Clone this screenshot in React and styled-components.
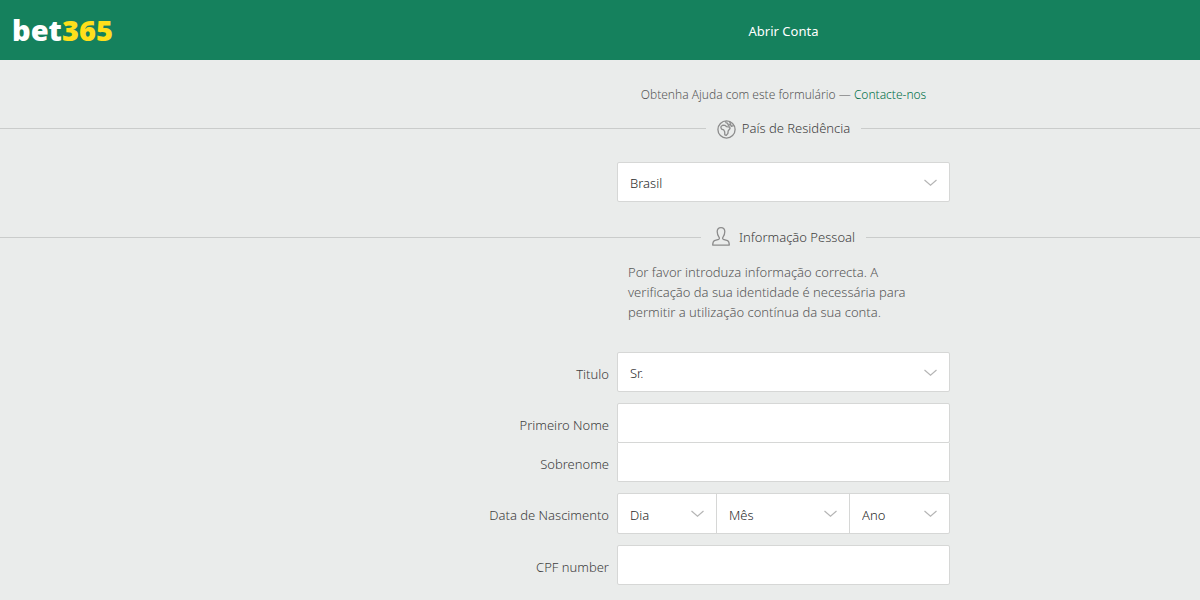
import React from 'react';
import styled, { createGlobalStyle } from 'styled-components';

const GlobalStyle = createGlobalStyle`
  * {
    box-sizing: border-box;
  }
  body {
    margin: 0;
    min-height: 100vh;
    background: #eaeceb;
    color: #404040;
    font-family: 'Noto Sans', 'Open Sans', sans-serif;
    font-size: 13px;
    font-weight: 300;
    line-height: 20px;
  }
`;

const Columns = styled.div`
  display: grid;
  grid-template-columns: minmax(140px, 1fr) 333px minmax(0, 250px);
  align-items: center;
`;

const Header = styled(Columns)`
  height: 60px;
  background: #15815d;
`;

const Logo = styled.a`
  padding-left: 12px;
  color: #ffffff;
  font-size: 29px;
  font-weight: 900;
  line-height: 58px;
  text-decoration: none;
  span {
    color: #ffdf1b;
  }
`;

const PageTitle = styled.h1`
  margin: 0;
  padding-top: 2px;
  color: #ffffff;
  font-size: 13px;
  font-weight: 400;
  text-align: center;
`;

const Form = styled.form`
  padding-top: 25px;
`;

const Help = styled.p`
  grid-column: 2;
  margin: 0;
  color: #585858;
  font-size: 12px;
  text-align: center;
  a {
    color: #007048;
    text-decoration: none;
  }
`;

// the rule runs through all three columns, the title sits over the fields
const SectionHeading = styled(Columns)`
  height: 24px;
  margin-top: ${props => props.$space}px;
  &::before,
  &::after {
    content: '';
    height: 1px;
    background: #cacccb;
  }
`;

const SectionTitle = styled.h2`
  display: flex;
  align-items: center;
  margin: 0;
  font-size: 13px;
  font-weight: 300;
  line-height: 24px;
  &::before,
  &::after {
    content: '';
    flex: 1;
    height: 1px;
    background: #cacccb;
  }
  &::before {
    margin-right: 11px;
  }
  &::after {
    margin-left: 11px;
  }
  svg {
    margin-right: ${props => props.$iconGap}px;
  }
`;

const Notice = styled.p`
  grid-column: 2;
  margin: 13px 0 19px;
  padding: 0 11px;
  color: #585858;
`;

const Row = styled(Columns)`
  margin-top: ${props => (props.$space === undefined ? 11 : props.$space)}px;
`;

const Label = styled.label`
  padding: 3px 8px 0 0;
  text-align: right;
`;

const Field = styled.div`
  grid-column: 2;
  display: grid;
  grid-template-columns: ${props => props.$split || '1fr'};
  border: 1px solid #d6d7d6;
  border-top-width: ${props => (props.$joined ? 0 : 1)}px;
  border-radius: ${props => (props.$joined ? '0 0 2px 2px' : '2px')};
  background: #ffffff;
`;

const TextInput = styled.input`
  width: 100%;
  height: 38px;
  padding: 0 12px;
  border: 0;
  background: transparent;
  color: #282828;
  font: inherit;
`;

const SelectBox = styled.div`
  position: relative;
  & + & {
    border-left: 1px solid #d6d7d6;
  }
  svg {
    position: absolute;
    top: 16px;
    right: 12px;
    pointer-events: none;
  }
`;

const Select = styled.select`
  display: block;
  width: 100%;
  height: ${props => props.$height || 38}px;
  padding: 2px 30px 0 12px;
  border: 0;
  background: transparent;
  appearance: none;
  color: #282828;
  font: inherit;
`;

const Chevron = () => (
  <svg width="13" height="8" viewBox="0 0 13 8" fill="none" stroke="#b5b5b5" strokeWidth="1.2">
    <path d="M.5 1l6 5.2 6-5.2" />
  </svg>
);

const GlobeIcon = () => (
  <svg width="19" height="22" viewBox="0 0 19 22" fill="none" stroke="#8c8c8c" strokeWidth="1.3" strokeLinejoin="round">
    <circle cx="9.5" cy="12.500" r="8.600" />
    <path d="M4.200 9.200l1.600-1 2.400.2 1.500 1.300 3 .3.300 1.500-1.800 2.300-.3 2.600-1.600 2-1.500-.6-.1-3-1.100-2-1.900-.6-.8-1.400z" />
    <path d="M8.500 4.200l.6 1.700 1.500.3.7 2.100 2.200-1 .8 2 2.300-.7M12.500 4.800l.9 1.300-.5 1.500" />
  </svg>
);

const PersonIcon = () => (
  <svg width="18" height="20" viewBox="1 1 18 20" fill="none" stroke="#8c8c8c" strokeWidth="1.3" strokeLinejoin="round">
    <path d="M10 1.700c-2.600 0-3.800 1.500-3.800 3.900 0 2.600.7 4.300 1.900 5.700.5.700.4 1.500-.4 2l-4.300 1.400c-1.100.5-1.600 1.500-1.700 4.400h16.600c-.1-2.900-.6-3.900-1.700-4.400l-4.300-1.400c-.8-.5-.9-1.300-.4-2 1.200-1.400 1.900-3.100 1.900-5.700 0-2.400-1.200-3.900-3.800-3.900z" />
  </svg>
);

const Dropdown = ({ children, ...rest }) => (
  <SelectBox>
    <Select {...rest}>
      <option>{children}</option>
    </Select>
    <Chevron />
  </SelectBox>
);

export default () => (
  <>
    <GlobalStyle />
    <Header as="header">
      <Logo href="#">
        bet<span>365</span>
      </Logo>
      <PageTitle>Abrir Conta</PageTitle>
    </Header>
    <Form>
      <Columns>
        <Help>
          Obtenha Ajuda com este formulário — <a href="#">Contacte-nos</a>
        </Help>
      </Columns>

      <SectionHeading $space={11}>
        <SectionTitle $iconGap={6}>
          <GlobeIcon />
          País de Residência
        </SectionTitle>
      </SectionHeading>
      <Row $space={22}>
        <Field>
          <Dropdown aria-label="País de Residência">Brasil</Dropdown>
        </Field>
      </Row>

      <SectionHeading $space={23}>
        <SectionTitle $iconGap={9}>
          <PersonIcon />
          Informação Pessoal
        </SectionTitle>
      </SectionHeading>
      <Columns>
        <Notice>
          Por favor introduza informação correcta. A verificação da sua identidade é necessária para
          permitir a utilização contínua da sua conta.
        </Notice>
      </Columns>

      <Row>
        <Label htmlFor="title">Titulo</Label>
        <Field>
          <Dropdown id="title">Sr.</Dropdown>
        </Field>
      </Row>
      <Row>
        <Label htmlFor="first-name">Primeiro Nome</Label>
        <Field>
          <TextInput id="first-name" type="text" />
        </Field>
      </Row>
      <Row $space={0}>
        <Label htmlFor="surname">Sobrenome</Label>
        <Field $joined>
          <TextInput id="surname" type="text" />
        </Field>
      </Row>
      <Row>
        <Label htmlFor="birth-day">Data de Nascimento</Label>
        <Field $split="98fr 133fr 100fr">
          <Dropdown id="birth-day" $height={39}>Dia</Dropdown>
          <Dropdown aria-label="Mês" $height={39}>Mês</Dropdown>
          <Dropdown aria-label="Ano" $height={39}>Ano</Dropdown>
        </Field>
      </Row>
      <Row>
        <Label htmlFor="cpf">CPF number</Label>
        <Field>
          <TextInput id="cpf" type="text" />
        </Field>
      </Row>
    </Form>
  </>
);
